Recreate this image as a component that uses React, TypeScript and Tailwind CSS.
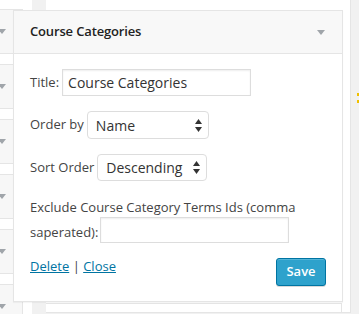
import React from "react";

const Tri = ({ color = "#a0a5aa" }: { color?: string }) => (
  <svg width="8" height="5" viewBox="0 0 8 5" className="block shrink-0">
    <path d="M0 0H8L4 5Z" fill={color} />
  </svg>
);

const SelArrows = () => (
  <svg width="7" height="13" viewBox="0 0 7 13" className="block shrink-0">
    <path d="M0 5L3.5 0L7 5Z" fill="#333" />
    <path d="M0 8H7L3.5 13Z" fill="#333" />
  </svg>
);

export default function App() {
  const items = [0, 1, 2, 3, 4, 5];
  return (
    <div className="relative w-[359px] h-[314px] overflow-hidden bg-[#f1f1f1] font-['Open_Sans',sans-serif]">
      {/* background layout */}
      <div className="flex h-full">
        <div className="w-[32px] h-full bg-white flex flex-col gap-[10px] pt-[9px] shrink-0">
          {items.map((i) => (
            <div
              key={i}
              className="h-[45px] w-[23px] shrink-0 bg-[#f7f7f7] border border-l-0 border-[#e5e5e5] flex items-center overflow-hidden"
            >
              <div className="ml-[-2px]">
                <Tri />
              </div>
            </div>
          ))}
        </div>
        <div className="w-[14px] shrink-0" />
        <div className="w-[305px] h-[313px] shrink-0 bg-white border-r border-b border-[#e5e5e5] flex flex-col justify-end">
          <div className="h-[9px] w-[296px] border-t border-r border-[#e5e5e5] bg-white" />
        </div>
      </div>

      {/* yellow marks at right edge */}
      <div className="absolute left-[357px] top-[93px] w-[2px] h-[3px] bg-[#f0c000]" />
      <div className="absolute left-[357px] top-[100px] w-[2px] h-[3px] bg-[#f0c000]" />

      {/* widget panel */}
      <div className="absolute left-[13px] top-[10px] w-[330px] h-[292px] bg-white border border-[#e5e5e5] shadow-[0_1px_1px_rgba(0,0,0,0.04)] flex flex-col">
        <div className="h-[43px] shrink-0 bg-[#f8f8f8] border-b border-[#e5e5e5] flex items-center justify-between pl-[16px] pr-[17px]">
          <span className="text-[13px] font-semibold text-[#222] tracking-[-0.15px]">Course Categories</span>
          <Tri />
        </div>

        <div className="flex flex-col px-[16px] text-[13px] text-[#444]">
          <div className="mt-[15px] flex items-center h-[27px]">
            <span>Title:</span>
            <div className="ml-[3px] w-[189px] h-[27px] border border-[#ddd] shadow-[inset_0_1px_2px_rgba(0,0,0,0.07)] flex items-center pl-[5px] text-[14px] text-[#333]">
              Course Categories
            </div>
          </div>

          <div className="mt-[15px] flex items-center h-[28px]">
            <span>Order by</span>
            <div className="ml-[3px] w-[122px] h-[28px] border border-[#ddd] rounded-[4px] flex items-center justify-between pl-[8px] pr-[6px] text-[14px] text-[#333]">
              <span>Name</span>
              <SelArrows />
            </div>
          </div>

          <div className="mt-[15px] flex items-center h-[27px]">
            <span>Sort Order</span>
            <div className="ml-[3px] w-[110px] h-[27px] border border-[#ddd] rounded-[4px] flex items-center justify-between pl-[8px] pr-[6px] text-[14px] text-[#333]">
              <span>Descending</span>
              <SelArrows />
            </div>
          </div>

          <div className="mt-[16px] leading-[20px]">Exclude Course Category Terms Ids (comma</div>
          <div className="flex items-center h-[26px]">
            <span className="mt-[5px]">saperated):</span>
            <div className="ml-[2px] w-[189px] h-[26px] border border-[#ddd] shadow-[inset_0_1px_2px_rgba(0,0,0,0.07)]" />
          </div>

          <div className="mt-[13px] flex items-start justify-between">
            <div className="leading-[20px]">
              <a className="text-[#0074a2] underline cursor-pointer">Delete</a>
              <span> | </span>
              <a className="text-[#0074a2] underline cursor-pointer">Close</a>
            </div>
            <button className="mt-[2px] w-[50px] h-[28px] rounded-[3px] bg-[#2ea2cc] border border-[#0074a2] shadow-[inset_0_1px_0_rgba(120,200,230,0.5),0_1px_0_rgba(0,0,0,0.15)] text-white text-[13px] font-semibold flex items-center justify-center">
              Save
            </button>
          </div>
        </div>
      </div>
    </div>
  );
}
